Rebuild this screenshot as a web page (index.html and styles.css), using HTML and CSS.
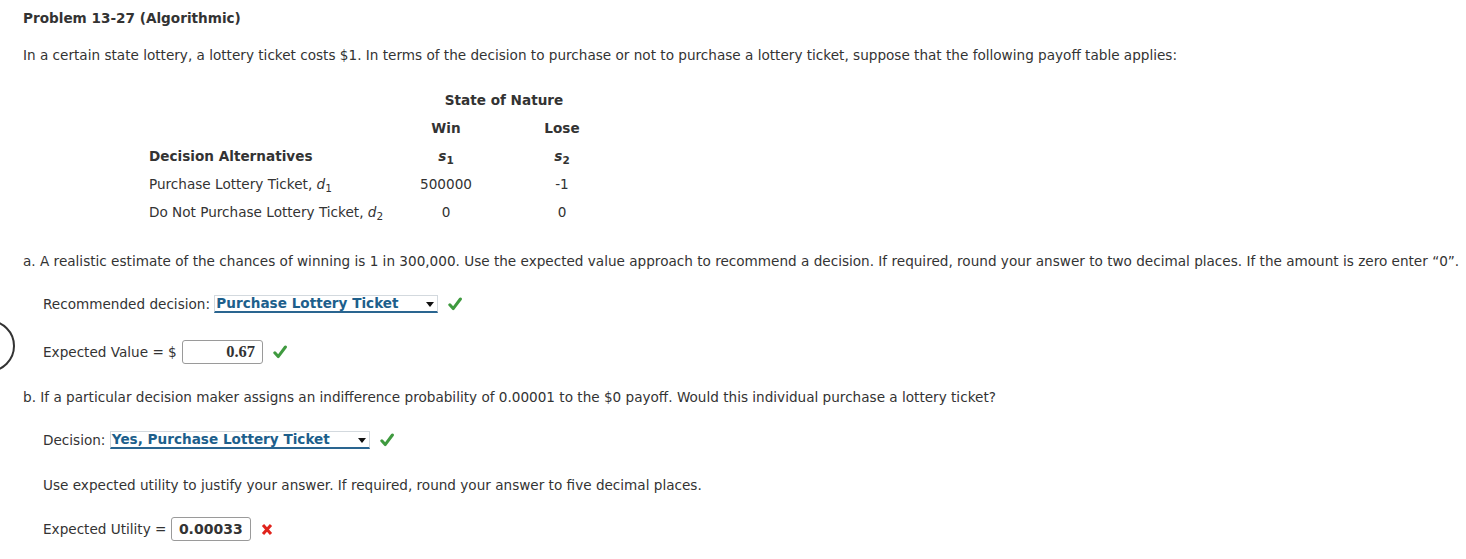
FILE: index.html
```html
<!DOCTYPE html>
<html>
<head>
<meta charset="utf-8">
<link rel="stylesheet" href="styles.css">
</head>
<body>
<div class="ring"></div>
<div class="page">
  <div class="title">Problem 13-27 (Algorithmic)</div>
  <p class="intro">In a certain state lottery, a lottery ticket costs $1. In terms of the decision to purchase or not to purchase a lottery ticket, suppose that the following payoff table applies:</p>
  <table class="payoff">
    <tr><td class="c1"></td><th colspan="2">State of Nature</th></tr>
    <tr><td class="c1"></td><th class="c2">Win</th><th class="c3">Lose</th></tr>
    <tr><th class="c1 left">Decision Alternatives</th><td class="c2"><span class="s">s</span><sub class="ss">1</sub></td><td class="c3"><span class="s">s</span><sub class="ss">2</sub></td></tr>
    <tr><td class="c1">Purchase Lottery Ticket, <i>d</i><sub>1</sub></td><td class="c2">500000</td><td class="c3">-1</td></tr>
    <tr><td class="c1">Do Not Purchase Lottery Ticket, <i>d</i><sub>2</sub></td><td class="c2">0</td><td class="c3">0</td></tr>
  </table>
  <p class="part pa">a. A realistic estimate of the chances of winning is 1 in 300,000. Use the expected value approach to recommend a decision. If required, round your answer to two decimal places. If the amount is zero enter “0”.</p>
  <div class="row r1">Recommended decision:&nbsp;<span class="sel w1"><span class="selText">Purchase Lottery Ticket</span><span class="arrow"></span></span><svg class="chk" viewBox="0 0 14 14"><path d="M1.8 7.8 L5.2 11.6 L12.4 2" /></svg></div>
  <div class="row r2">Expected Value = $&nbsp;<span class="inp w2 serif">0.67</span><svg class="chk" viewBox="0 0 14 14"><path d="M1.8 7.8 L5.2 11.6 L12.4 2" /></svg></div>
  <p class="part pb">b. If a particular decision maker assigns an indifference probability of 0.00001 to the $0 payoff. Would this individual purchase a lottery ticket?</p>
  <div class="row r3">Decision:&nbsp;<span class="sel w3"><span class="selText">Yes, Purchase Lottery Ticket</span><span class="arrow"></span></span><svg class="chk" viewBox="0 0 14 14"><path d="M1.8 7.8 L5.2 11.6 L12.4 2" /></svg></div>
  <p class="part pc">Use expected utility to justify your answer. If required, round your answer to five decimal places.</p>
  <div class="row r4">Expected Utility =&nbsp;<span class="inp w4">0.00033</span><svg class="xmark" viewBox="0 0 12 12"><path d="M2 1.5 L10 10.5 M10 1.5 L2 10.5" /></svg></div>
</div>
</body>
</html>
```

FILE: styles.css
```css
html, body {
  margin: 0;
  padding: 0;
  background: #ffffff;
}
body {
  font-family: "DejaVu Sans", Verdana, sans-serif;
  font-size: 13.6px;
  color: #333333;
  position: relative;
  width: 1466px;
  height: 559px;
  overflow: hidden;
}
.ring {
  position: absolute;
  left: -37px;
  top: 320px;
  width: 48px;
  height: 48px;
  border: 2px solid #333;
  border-radius: 50%;
}
.page {
  padding: 10px 0 0 23px;
  display: flex;
  flex-direction: column;
  align-items: flex-start;
}
.title {
  font-weight: bold;
  line-height: 16px;
}
p {
  margin: 0;
  line-height: 16px;
}
.intro {
  margin-top: 21px;
}
.payoff {
  margin-top: 23px;
  margin-left: 126px;
  border-collapse: collapse;
}
.payoff td, .payoff th {
  padding: 0;
  height: 28px;
  text-align: center;
  font-weight: normal;
  vertical-align: middle;
}
.payoff th {
  font-weight: bold;
}
.payoff .c1 {
  width: 239px;
  text-align: left;
}
.payoff .c2, .payoff .c3 {
  width: 116px;
}
.payoff sub {
  font-size: 10.5px;
  vertical-align: -3px;
  line-height: 0;
}
.s {
  font-weight: bold;
  font-style: italic;
}
.ss {
  font-weight: bold;
}
.pa { margin-top: 27px; }
.row {
  margin-left: 20px;
  display: flex;
  align-items: center;
  line-height: 16px;
}
.r1 { margin-top: 25px; height: 20px; }
.r2 { margin-top: 26px; height: 24px; }
.pb { margin-top: 25px; }
.r3 { margin-top: 25px; height: 20px; }
.pc { margin-top: 27px; margin-left: 20px; }
.r4 { margin-top: 24px; height: 24px; }
.sel {
  display: inline-flex;
  align-items: center;
  justify-content: space-between;
  height: 18px;
  box-sizing: border-box;
  border: 1px solid #d3d9de;
  border-bottom: 2px solid #2a6590;
  padding: 0 3px 0 1px;
  color: #1d5f8c;
  font-weight: bold;
}
.selText {
  line-height: 15px;
}
.w1 { width: 224px; }
.w3 { width: 260px; }
.arrow {
  width: 0;
  height: 0;
  margin-top: 1px;
  border-left: 4px solid transparent;
  border-right: 4px solid transparent;
  border-top: 5px solid #111;
}
.chk {
  width: 14px;
  height: 14px;
  margin-left: 10px;
  fill: none;
  stroke: #3f9a3f;
  stroke-width: 3;
  stroke-linecap: round;
  stroke-linejoin: round;
}
.inp {
  display: inline-flex;
  align-items: center;
  justify-content: flex-end;
  box-sizing: border-box;
  height: 24px;
  border: 1px solid #9a9a9a;
  border-radius: 3px;
  padding: 0 7px;
  font-weight: bold;
  font-size: 14px;
  color: #333;
}
.serif {
  font-family: "Liberation Serif", "DejaVu Serif", serif;
  font-size: 16.5px;
}
.w2 { width: 81px; margin-left: 1px; }
.w4 { width: 80px; justify-content: center; }
.xmark {
  width: 12px;
  height: 13px;
  margin-left: 10px;
  fill: none;
  stroke: #e0231c;
  stroke-width: 3;
}
```
